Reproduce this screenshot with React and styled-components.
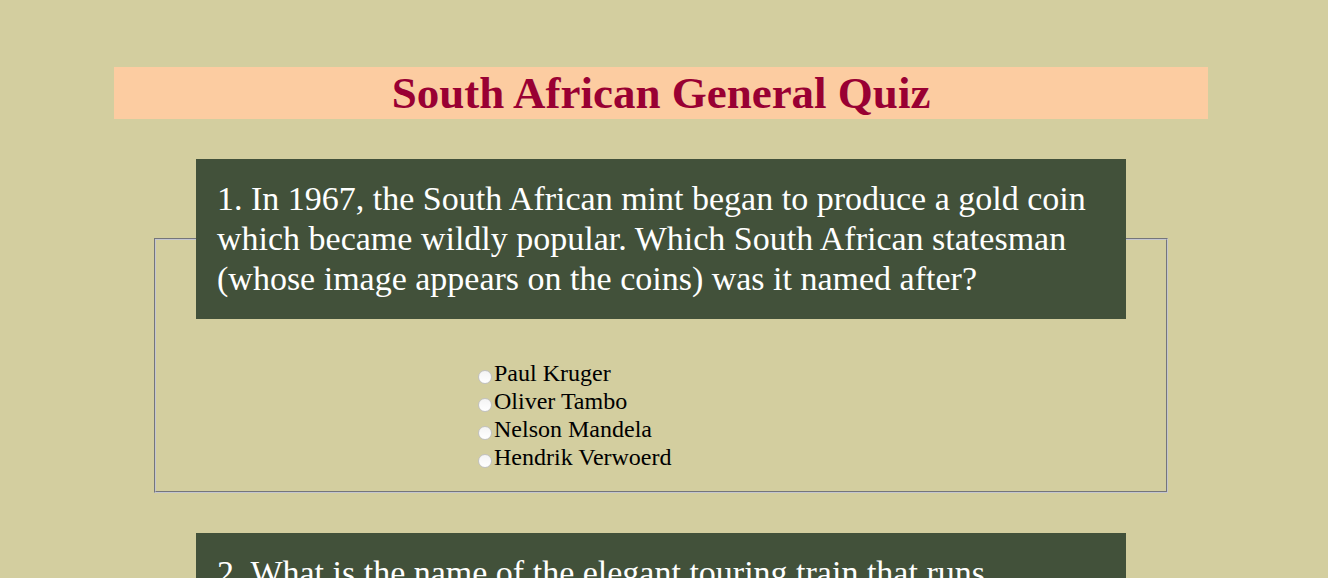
import React from 'react';
import styled, { createGlobalStyle } from 'styled-components';

const questions = [
  {
    id: 1,
    text: '1. In 1967, the South African mint began to produce a gold coin which became wildly popular. Which South African statesman (whose image appears on the coins) was it named after?',
    options: ['Paul Kruger', 'Oliver Tambo', 'Nelson Mandela', 'Hendrik Verwoerd'],
  },
  {
    id: 2,
    text: '2. What is the name of the elegant touring train that runs approximately 1600 km between Pretoria and Cape Town?',
    options: ['The Blue Train', 'Rovos Rail', 'Shosholoza Meyl', 'The Gautrain'],
  },
];

const GlobalStyle = createGlobalStyle`
  html, body {
    margin: 0;
    padding: 0;
    background: #d3ce9f;
  }
  body {
    font-family: "Liberation Serif", "Times New Roman", serif;
  }
`;

const Page = styled.div`
  width: 1094px;
  padding: 67px 0 40px 114px;
`;

const Title = styled.h1`
  margin: 0;
  height: 52px;
  line-height: 52px;
  background: #fccca1;
  color: #990033;
  font-size: 45px;
  font-weight: bold;
  text-align: center;
`;

const Question = styled.fieldset`
  box-sizing: border-box;
  width: 1014px;
  margin: 40px 40px 0;
  padding: 0 0 20px 40px;
  border: 2px groove #c4c6cf;
  min-inline-size: 0;
`;

const Prompt = styled.legend`
  box-sizing: border-box;
  width: 930px;
  padding: 20px 21px;
  background: #42513a;
  color: #ffffff;
  font-size: 34px;
  line-height: 40px;
`;

const Options = styled.div`
  margin: 40px 0 0 282px;
  font-size: 24px;
  line-height: 28px;
  color: #000;
`;

const Option = styled.label`
  display: block;
`;

const Radio = styled.input`
  appearance: none;
  box-sizing: border-box;
  width: 14px;
  height: 14px;
  margin: 0 2px 0 0;
  border-radius: 50%;
  border: 1px solid #c2c2c2;
  background: linear-gradient(#f4f4f4, #ffffff);
  vertical-align: -3px;
`;

export default function App() {
  return (
    <>
      <GlobalStyle />
      <Page>
        <Title>South African General Quiz</Title>
        {questions.map((q) => (
          <Question key={q.id}>
            <Prompt>{q.text}</Prompt>
            <Options>
              {q.options.map((o) => (
                <Option key={o}>
                  <Radio type="radio" name={`q${q.id}`} value={o} />
                  {o}
                </Option>
              ))}
            </Options>
          </Question>
        ))}
      </Page>
    </>
  );
}
